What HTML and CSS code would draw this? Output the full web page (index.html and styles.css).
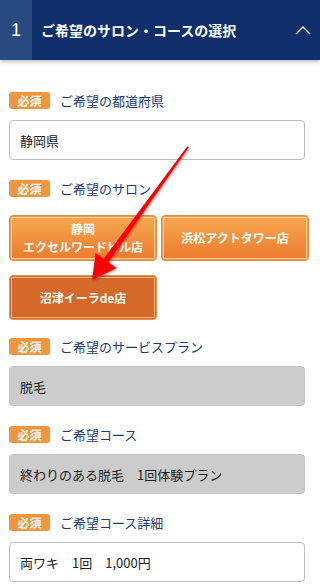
FILE: index.html
```html
<!DOCTYPE html>
<html lang="ja">
<head>
    <meta charset="UTF-8">
    <meta name="viewport" content="width=device-width, initial-scale=1.0">
    <title>ご希望のサロン・コースの選択</title>
    <link rel="stylesheet" href="styles.css">
</head>
<body>

    <div class="step-header">
        <div class="step-num">1</div>
        <div class="step-title">ご希望のサロン・コースの選択</div>
        <svg class="step-toggle" width="16" height="10" viewBox="0 0 16 10">
            <polyline points="1,9 8,2 15,9" fill="none" stroke="#fff" stroke-width="1.4"/>
        </svg>
    </div>

    <div class="form-body">
        <div class="field">
            <div class="field-label"><span class="badge">必須</span>ご希望の都道府県</div>
            <div class="box">静岡県</div>
        </div>

        <div class="field">
            <div class="field-label"><span class="badge">必須</span>ご希望のサロン</div>
            <div class="salon-list">
                <button class="salon-btn">静岡<br>エクセルワードビル店</button>
                <button class="salon-btn">浜松アクトタワー店</button>
                <button class="salon-btn is-selected">沼津イーラde店</button>
            </div>
        </div>

        <div class="field">
            <div class="field-label"><span class="badge">必須</span>ご希望のサービスプラン</div>
            <div class="box is-locked">脱毛</div>
        </div>

        <div class="field">
            <div class="field-label"><span class="badge">必須</span>ご希望コース</div>
            <div class="box is-locked">終わりのある脱毛　1回体験プラン</div>
        </div>

        <div class="field">
            <div class="field-label"><span class="badge">必須</span>ご希望コース詳細</div>
            <div class="box">両ワキ　1回　1,000円</div>
        </div>
    </div>

    <!-- annotation arrow drawn over the page -->
    <svg class="note-arrow" width="320" height="588" viewBox="0 0 320 588">
        <defs>
            <filter id="arrowShadow" x="-20%" y="-20%" width="140%" height="140%">
                <feDropShadow dx="1" dy="1.5" stdDeviation="1.2" flood-color="#000" flood-opacity="0.3"/>
            </filter>
        </defs>
        <polygon filter="url(#arrowShadow)" fill="#ff0000"
            points="188.8,147.6 108.5,262.3 116.6,268.1 92,280 95.6,252.9 103.7,258.7 187.2,146.4"/>
    </svg>

</body>
</html>
```

FILE: styles.css
```css
body {
    margin: 0;
    font-family: "Noto Sans CJK JP", "Noto Sans", sans-serif;
    background-color: #fff;
    color: #222;
    position: relative;
}

.step-header {
    display: flex;
    align-items: center;
    height: 60px;
    background-color: #0f2e6b;
    color: #fff;
    box-shadow: 0 2px 4px rgba(0, 0, 0, 0.25);
}

.step-num {
    width: 32px;
    height: 60px;
    display: flex;
    align-items: center;
    justify-content: center;
    background-color: #284a80;
    font-family: "Liberation Sans", sans-serif;
    font-size: 18px;
}

.step-title {
    flex: 1;
    padding-left: 9px;
    font-size: 14px;
    font-weight: bold;
}

.step-toggle {
    margin-right: 9px;
    margin-top: -1px;
}

.form-body {
    padding: 32px 15px 0 9px;
}

.field {
    margin-bottom: 20px;
}

.field-label {
    display: flex;
    align-items: center;
    height: 17px;
    margin-bottom: 11px;
    font-size: 13px;
    color: #1e3a78;
}

.badge {
    display: inline-flex;
    align-items: center;
    justify-content: center;
    width: 41px;
    height: 17px;
    margin-right: 10px;
    background-color: #f0963e;
    color: #fff;
    border-radius: 3px;
    font-size: 12px;
    font-weight: bold;
}

.box {
    height: 40px;
    box-sizing: border-box;
    display: flex;
    align-items: center;
    padding-left: 10px;
    border: 1px solid #bdbdbd;
    border-radius: 4px;
    font-size: 13px;
    color: #222;
}

.box.is-locked {
    background-color: #cccccc;
    border-color: #c4c4c4;
}

.salon-list {
    display: grid;
    grid-template-columns: 148px 148px;
    column-gap: 4px;
    row-gap: 14px;
    padding-top: 7px;
    margin-bottom: -2px;
}

.salon-btn {
    height: 46px;
    padding: 0;
    border: 1px solid #e98a3c;
    border-radius: 4px;
    background: linear-gradient(#f7a850, #eb7b2e);
    box-shadow: inset 0 0 0 1px #ec9a52, inset 0 0 0 2px rgba(255, 226, 190, 0.8);
    color: #fff;
    font-family: inherit;
    font-size: 12px;
    font-weight: bold;
    line-height: 18px;
    cursor: pointer;
}

.salon-btn.is-selected {
    height: 45px;
    background: #d5692a;
    border-color: #e6904a;
    box-shadow: inset 0 0 0 1px #d5692a, inset 0 0 0 2px rgba(255, 200, 150, 0.8);
}

.note-arrow {
    position: absolute;
    left: 0;
    top: 0;
    pointer-events: none;
}
```
